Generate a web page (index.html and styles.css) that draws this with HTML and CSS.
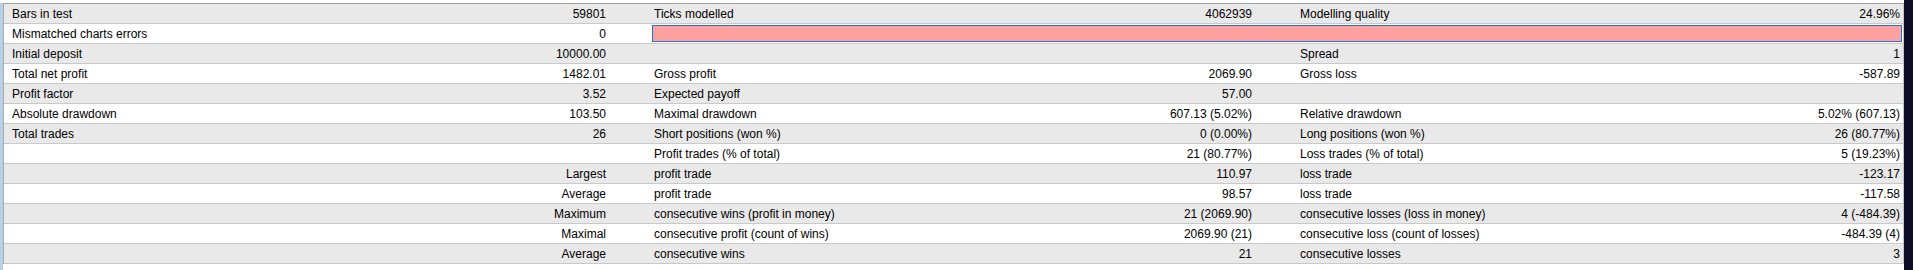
FILE: index.html
```html
<!DOCTYPE html>
<html>
<head>
<meta charset="utf-8">
<link rel="stylesheet" href="styles.css">
</head>
<body>
<div class="frame">
  <div class="strip"></div>
  <div class="report">
    <div class="row odd"><div class="lbl first">Bars in test</div><div class="val">59801</div><div class="lbl">Ticks modelled</div><div class="val">4062939</div><div class="lbl">Modelling quality</div><div class="val last">24.96%</div></div>
    <div class="row"><div class="lbl first">Mismatched charts errors</div><div class="val">0</div><div class="barcell"><div class="quality"></div></div></div>
    <div class="row odd"><div class="lbl first">Initial deposit</div><div class="val">10000.00</div><div class="lbl"></div><div class="val"></div><div class="lbl">Spread</div><div class="val last">1</div></div>
    <div class="row"><div class="lbl first">Total net profit</div><div class="val">1482.01</div><div class="lbl">Gross profit</div><div class="val">2069.90</div><div class="lbl">Gross loss</div><div class="val last">-587.89</div></div>
    <div class="row odd"><div class="lbl first">Profit factor</div><div class="val">3.52</div><div class="lbl">Expected payoff</div><div class="val">57.00</div><div class="lbl"></div><div class="val last"></div></div>
    <div class="row"><div class="lbl first">Absolute drawdown</div><div class="val">103.50</div><div class="lbl">Maximal drawdown</div><div class="val">607.13 (5.02%)</div><div class="lbl">Relative drawdown</div><div class="val last">5.02% (607.13)</div></div>
    <div class="row odd"><div class="lbl first">Total trades</div><div class="val">26</div><div class="lbl">Short positions (won %)</div><div class="val">0 (0.00%)</div><div class="lbl">Long positions (won %)</div><div class="val last">26 (80.77%)</div></div>
    <div class="row"><div class="lbl first"></div><div class="val"></div><div class="lbl">Profit trades (% of total)</div><div class="val">21 (80.77%)</div><div class="lbl">Loss trades (% of total)</div><div class="val last">5 (19.23%)</div></div>
    <div class="row odd"><div class="lbl first"></div><div class="val">Largest</div><div class="lbl">profit trade</div><div class="val">110.97</div><div class="lbl">loss trade</div><div class="val last">-123.17</div></div>
    <div class="row"><div class="lbl first"></div><div class="val">Average</div><div class="lbl">profit trade</div><div class="val">98.57</div><div class="lbl">loss trade</div><div class="val last">-117.58</div></div>
    <div class="row odd"><div class="lbl first"></div><div class="val">Maximum</div><div class="lbl">consecutive wins (profit in money)</div><div class="val">21 (2069.90)</div><div class="lbl">consecutive losses (loss in money)</div><div class="val last">4 (-484.39)</div></div>
    <div class="row"><div class="lbl first"></div><div class="val">Maximal</div><div class="lbl">consecutive profit (count of wins)</div><div class="val">2069.90 (21)</div><div class="lbl">consecutive loss (count of losses)</div><div class="val last">-484.39 (4)</div></div>
    <div class="row odd"><div class="lbl first"></div><div class="val">Average</div><div class="lbl">consecutive wins</div><div class="val">21</div><div class="lbl">consecutive losses</div><div class="val last">3</div></div>
  </div>
  <div class="dark"></div>
</div>
</body>
</html>
```

FILE: styles.css
```css
html, body {
  margin: 0;
  padding: 0;
  background: #ffffff;
  height: 270px;
  overflow: hidden;
}

body {
  font-family: "Liberation Sans", Arial, sans-serif;
  font-size: 12px;
  color: #000000;
}

.frame {
  display: flex;
  height: 270px;
  padding-top: 3px;
  box-sizing: border-box;
  background: #ffffff;
}

.strip {
  width: 3px;
  flex: none;
  background: #b8cfe8;
}

.report {
  width: 1899px;
  flex: none;
  border-left: 1px solid #a9a9a9;
  border-top: 1px solid #a0a0a0;
  border-right: 1px solid #c4c4c4;
  align-self: flex-start;
}

.dark {
  flex: 1;
  background: #0c0c24;
  margin-top: -3px;
}

.row {
  display: grid;
  grid-template-columns: 300px 346px 300px 346px 300px 307px;
  height: 19px;
  border-bottom: 1px solid #c9c9c9;
  background: #ffffff;
  line-height: 20px;
  overflow: hidden;
}

.row.odd {
  background: #e9e9e9;
}

.lbl {
  padding-left: 4px;
  white-space: nowrap;
  overflow: hidden;
}

.lbl.first {
  padding-left: 8px;
}

.val {
  text-align: right;
  padding-right: 44px;
  white-space: nowrap;
}

.val.last {
  padding-right: 3px;
}

.barcell {
  grid-column: 3 / 7;
  padding: 1px 1px 1px 2px;
  display: flex;
  height: 17px;
}

.quality {
  flex: 1;
  background: #ffa1a1;
  border: 1px solid #1a78d2;
}
```
